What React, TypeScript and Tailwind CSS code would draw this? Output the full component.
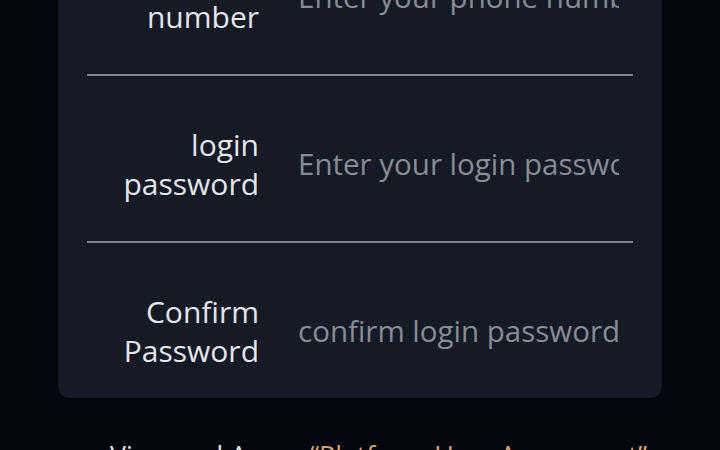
import React from 'react';

type Field = {
  label: string[];
  placeholder: string;
  type: string;
};

const FIELDS: Field[] = [
  { label: ['phone', 'number'], placeholder: 'Enter your phone number', type: 'tel' },
  { label: ['login', 'password'], placeholder: 'Enter your login password', type: 'password' },
  { label: ['Confirm', 'Password'], placeholder: 'confirm login password', type: 'password' },
];

const FormRow: React.FC<{ field: Field; last: boolean }> = ({ field, last }) => (
  <div className={`flex items-center pt-[49px] ${last ? 'pb-[28px]' : 'pb-[38px] border-b-2 border-[#7f848d]'}`}>
    <label className="w-[172px] shrink-0 text-right text-[30px] leading-[39px] text-[#e4e6ea]">
      {field.label.map((line) => (
        <span key={line} className="block">{line}</span>
      ))}
    </label>
    <input
      type={field.type === 'password' ? 'text' : field.type}
      placeholder={field.placeholder}
      className="ml-[39px] mt-[-2px] w-[321px] bg-transparent text-[29.5px] leading-[39px] text-[#e4e6ea] outline-none placeholder:text-[#878c95]"
    />
  </div>
);

export default function App() {
  return (
    <div
      className="h-[450px] w-[720px] overflow-hidden bg-[#03060d]"
      style={{ fontFamily: '"Open Sans", "Noto Sans", sans-serif' }}
    >
      <div className="mx-[58px] mt-[-91px] rounded-b-[12px] bg-[#151a25] px-[29px]">
        {FIELDS.map((f, i) => (
          <FormRow key={f.placeholder} field={f} last={i === FIELDS.length - 1} />
        ))}
      </div>

      <p className="mt-[38px] pl-[110px] text-[26.8px] leading-[39px] text-[#e4e6ea] whitespace-nowrap">
        View and Agree <span className="text-[#d9a36f]">“Platform User Agreement”</span>
      </p>
    </div>
  );
}
